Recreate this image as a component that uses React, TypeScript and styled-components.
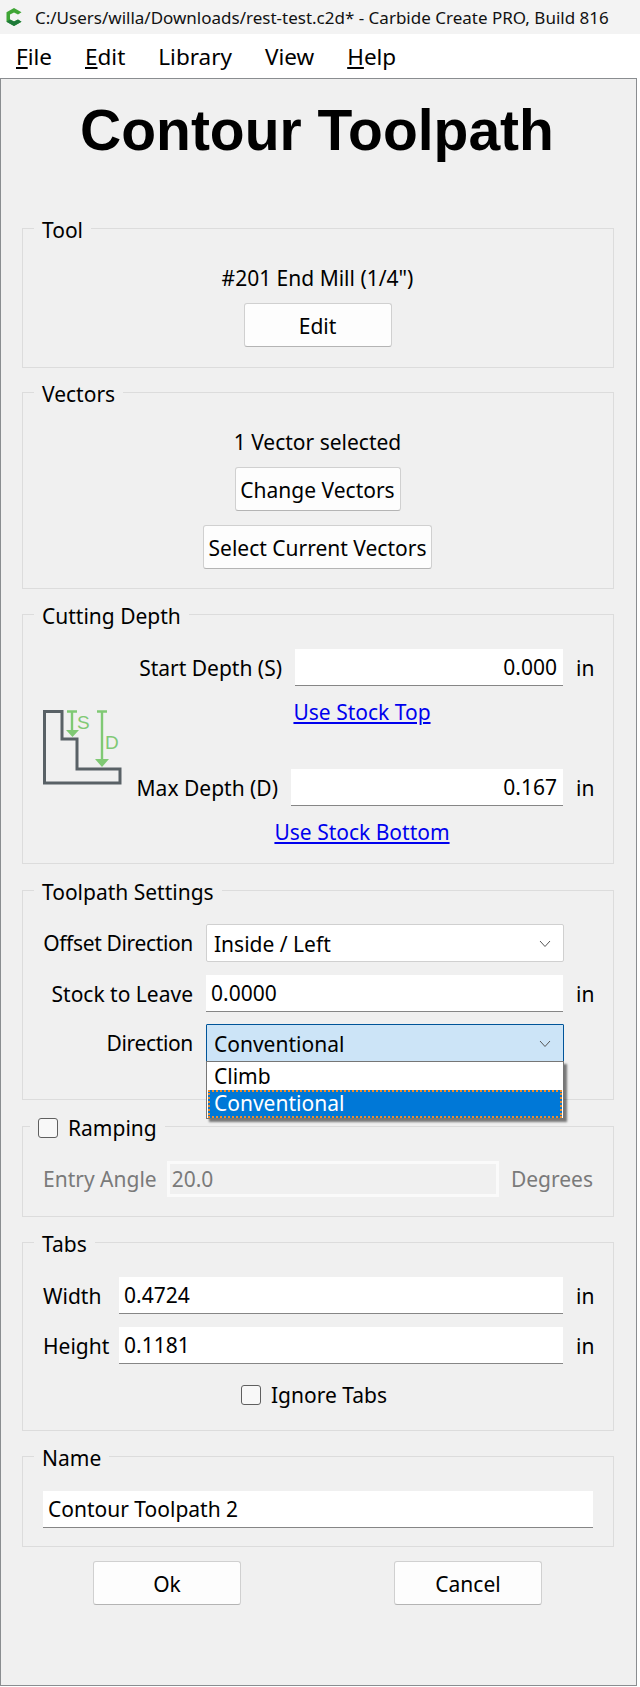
import React from "react";
import styled, { createGlobalStyle } from "styled-components";

const Global = createGlobalStyle`
  html, body { margin: 0; padding: 0; background: #fff; }
  body { font-family: "Noto Sans", "Liberation Sans", sans-serif; font-size: 21px; color: #000; }
  * { box-sizing: border-box; }
`;

const Page = styled.div`
  width: 640px;
  height: 1687px;
  overflow: hidden;
  background: #fff;
`;

const TitleBar = styled.div`
  height: 34px;
  background: #f3f3f3;
  display: flex;
  align-items: center;
  padding-left: 6px;
  gap: 13px;
  font-size: 17px;
  color: #111;
  white-space: nowrap;
`;

const MenuBar = styled.div`
  height: 44px;
  display: flex;
  align-items: center;
  padding-left: 16px;
  gap: 33px;
  font-size: 22.5px;
`;

const Underlined = styled.span`
  text-decoration: underline;
`;

const Dialog = styled.div`
  width: 637px;
  height: 1608px;
  background: #f0f0f0;
  border: 1px solid #8a8d90;
  padding: 0 22px 0 21px;
`;

const Heading = styled.h1`
  margin: 20px 0 0;
  height: 104px;
  padding-right: 2px;
  text-align: center;
  font-family: "Liberation Sans", sans-serif;
  font-size: 57px;
  line-height: 62px;
  font-weight: 700;
  white-space: nowrap;
`;

const Group = styled.section<{ $height: number; $gap: number }>`
  position: relative;
  height: ${(p) => p.$height}px;
  margin-top: ${(p) => p.$gap}px;
  border: 1px solid #dcdcdc;
`;

const Legend = styled.div<{ $left?: number }>`
  position: absolute;
  left: ${(p) => p.$left ?? 11}px;
  top: -13px;
  height: 28px;
  padding: 0 8px;
  line-height: 28px;
  background: #f0f0f0;
  display: flex;
  align-items: center;
  gap: 10px;
  white-space: nowrap;
`;

const Body = styled.div<{ $top: number }>`
  display: flex;
  flex-direction: column;
  align-items: center;
  padding: ${(p) => p.$top}px 1px 0 0;
`;

const Line = styled.div`
  height: 28px;
  line-height: 28px;
`;

const Button = styled.button<{ $w: number; $mt?: number }>`
  width: ${(p) => p.$w}px;
  height: 44px;
  margin-top: ${(p) => p.$mt ?? 0}px;
  background: #fdfdfd;
  border: 1px solid #d0d0d0;
  border-bottom-color: #b4b4b4;
  border-radius: 3px;
  font: inherit;
  color: #000;
  padding: 2px 0 0;
  white-space: nowrap;
`;

const Field = styled.div<{ $align?: string }>`
  height: 37px;
  flex: 1;
  min-width: 0;
  background: #fff;
  border-bottom: 1px solid #868686;
  padding: 0 6px 0 5px;
  line-height: 36px;
  text-align: ${(p) => p.$align ?? "left"};
`;

const Row = styled.div<{ $mt?: number; $pl?: number; $gap?: number }>`
  display: flex;
  align-items: center;
  margin-top: ${(p) => p.$mt ?? 0}px;
  padding-left: ${(p) => p.$pl ?? 20}px;
  gap: ${(p) => p.$gap ?? 13}px;
  padding-right: 20px;
`;

const Unit = styled.div`
  width: 17px;
`;

const Label = styled.div<{ $w: number; $tight?: boolean }>`
  width: ${(p) => p.$w}px;
  flex: none;
  text-align: right;
  white-space: nowrap;
  letter-spacing: ${(p) => (p.$tight ? "-0.35px" : "normal")};
`;

const LeftLabel = styled(Label)`
  text-align: left;
`;

const DepthArea = styled.div`
  display: flex;
  padding-top: 34px;
`;

const DepthIconBox = styled.div`
  width: 111px;
  flex: none;
  padding: 61px 0 0 20px;
`;

const DepthFields = styled.div`
  flex: 1;
`;

const LinkRow = styled.div<{ $mt: number }>`
  margin-top: ${(p) => p.$mt}px;
  text-align: center;
  padding-right: 23px;
  height: 28px;
  line-height: 28px;
`;

const Link = styled.a`
  color: #0000ee;
  text-decoration: underline;
`;

const ComboWrap = styled.div`
  position: relative;
  flex: 1;
  margin-right: 29px;
  min-width: 0;
`;

const Combo = styled.div<{ $active?: boolean }>`
  height: 38px;
  background: ${(p) => (p.$active ? "#cce4f7" : "#fff")};
  border: 1px solid ${(p) => (p.$active ? "#005499" : "#d0d0d0")};
  border-radius: ${(p) => (p.$active ? "1px" : "2px")};
  display: flex;
  align-items: center;
  justify-content: space-between;
  padding: 2px 12px 0 7px;
`;

const DropList = styled.div`
  position: absolute;
  left: 0;
  right: 0;
  top: 37px;
  height: 58px;
  background: #fff;
  border: 1px solid #767676;
  box-shadow: 3px 3px 2px rgba(0, 0, 0, 0.5);
  padding: 1px 1px 0;
  z-index: 2;
`;

const Option = styled.div<{ $on?: boolean }>`
  height: ${(p) => (p.$on ? 28 : 27)}px;
  line-height: 26px;
  padding-left: 6px;
  color: ${(p) => (p.$on ? "#fff" : "#000")};
  background: ${(p) => (p.$on ? "#0078d7" : "transparent")};
  outline: ${(p) => (p.$on ? "2px dotted #f28c28" : "none")};
  outline-offset: -2px;
`;

const Check = styled.span`
  display: inline-block;
  width: 20px;
  height: 20px;
  background: #f8f8f8;
  border: 1px solid #5f5f5f;
  border-radius: 3px;
  flex: none;
`;

const CheckRow = styled.div`
  display: flex;
  align-items: center;
  justify-content: center;
  gap: 10px;
  margin-top: 17px;
  padding-right: 8px;
`;

const DisabledField = styled.div`
  flex: 1;
  height: 36px;
  margin-right: 2px;
  border: 3px solid #fafafa;
  background: #f0f0f0;
  color: #7a7a7a;
  line-height: 30px;
  padding-left: 2px;
`;

const Muted = styled.div`
  color: #7a7a7a;
  white-space: nowrap;
`;

const Footer = styled.div`
  display: flex;
  justify-content: space-between;
  padding: 14px 72px 0 71px;
`;

const Chevron = () => (
  <svg width="12" height="8" viewBox="0 0 12 8" fill="none" stroke="#555" strokeWidth="1">
    <path d="M1 1 L6 6.5 L11 1" />
  </svg>
);

const AppLogo = () => (
  <svg width="16" height="18" viewBox="0 0 16 18">
    <path d="M8 0 L15.5 4.3 L12 6.6 L8 4.4 L4 6.6 V11.4 L8 13.6 L12 11.4 L15.5 13.7 L8 18 L0.5 13.7 V4.3 Z" fill="#3fa535" />
    <path d="M0.5 13.7 L4 11.4 L8 13.6 L12 11.4 L15.5 13.7 L8 18 Z" fill="#1f7a3a" />
  </svg>
);

const DepthIcon = () => (
  <svg width="80" height="76" viewBox="0 0 80 76" fill="none">
    <path d="M1.5 1.5 H19 V29 H34 V59 H77 V73 H1.5 Z" stroke="#596166" strokeWidth="3" />
    <g stroke="#80c974" strokeWidth="2.4">
      <path d="M24 1.5 H34 M29 1.5 V21" />
      <path d="M54 1.5 H64 M59 1.5 V50" />
    </g>
    <path d="M23 20 H36 L29.5 27 Z M52 49 H66 L59 57 Z" fill="#80c974" />
    <text x="34" y="19" fontSize="19" fontFamily="Liberation Sans, sans-serif" fill="#80c974">S</text>
    <text x="62" y="39" fontSize="19" fontFamily="Liberation Sans, sans-serif" fill="#80c974">D</text>
  </svg>
);

export default function App() {
  return (
    <Page>
      <Global />
      <TitleBar>
        <AppLogo />
        <span>C:/Users/willa/Downloads/rest-test.c2d* - Carbide Create PRO, Build 816</span>
      </TitleBar>
      <MenuBar>
        <span><Underlined>F</Underlined>ile</span>
        <span><Underlined>E</Underlined>dit</span>
        <span>Library</span>
        <span>View</span>
        <span><Underlined>H</Underlined>elp</span>
      </MenuBar>
      <Dialog>
        <Heading>Contour Toolpath</Heading>
        <Group $height={140} $gap={25}>
          <Legend>Tool</Legend>
          <Body $top={35}>
            <Line>#201 End Mill (1/4")</Line>
            <Button $w={148} $mt={11}>Edit</Button>
          </Body>
        </Group>
        <Group $height={197} $gap={24}>
          <Legend>Vectors</Legend>
          <Body $top={35}>
            <Line>1 Vector selected</Line>
            <Button $w={166} $mt={11}>Change Vectors</Button>
            <Button $w={229} $mt={14}>Select Current Vectors</Button>
          </Body>
        </Group>
        <Group $height={250} $gap={25}>
          <Legend>Cutting Depth</Legend>
          <DepthArea>
            <DepthIconBox><DepthIcon /></DepthIconBox>
            <DepthFields>
              <Row $pl={0} $gap={13}>
                <Label $w={148}>Start Depth (S)</Label>
                <Field $align="right">0.000</Field>
                <Unit>in</Unit>
              </Row>
              <LinkRow $mt={12}><Link>Use Stock Top</Link></LinkRow>
              <Row $pl={0} $mt={43} $gap={13}>
                <Label $w={144}>Max Depth (D)</Label>
                <Field $align="right">0.167</Field>
                <Unit>in</Unit>
              </Row>
              <LinkRow $mt={12}><Link>Use Stock Bottom</Link></LinkRow>
            </DepthFields>
          </DepthArea>
        </Group>
        <Group $height={210} $gap={26}>
          <Legend>Toolpath Settings</Legend>
          <Row $mt={33} $gap={13}>
            <Label $w={150} $tight>Offset Direction</Label>
            <ComboWrap>
              <Combo>Inside / Left<Chevron /></Combo>
            </ComboWrap>
          </Row>
          <Row $mt={13} $gap={13}>
            <Label $w={150}>Stock to Leave</Label>
            <Field>0.0000</Field>
            <Unit>in</Unit>
          </Row>
          <Row $mt={12} $gap={13}>
            <Label $w={150} $tight>Direction</Label>
            <ComboWrap>
              <Combo $active>Conventional<Chevron /></Combo>
              <DropList>
                <Option>Climb</Option>
                <Option $on>Conventional</Option>
              </DropList>
            </ComboWrap>
          </Row>
        </Group>
        <Group $height={91} $gap={26}>
          <Legend $left={7}><Check />Ramping</Legend>
          <Row $mt={34} $gap={10}>
            <Muted>Entry Angle</Muted>
            <DisabledField>20.0</DisabledField>
            <Muted>Degrees</Muted>
          </Row>
        </Group>
        <Group $height={189} $gap={25}>
          <Legend>Tabs</Legend>
          <Row $mt={34} $gap={13}>
            <LeftLabel $w={63}>Width</LeftLabel>
            <Field>0.4724</Field>
            <Unit>in</Unit>
          </Row>
          <Row $mt={13} $gap={13}>
            <LeftLabel $w={63}>Height</LeftLabel>
            <Field>0.1181</Field>
            <Unit>in</Unit>
          </Row>
          <CheckRow><Check />Ignore Tabs</CheckRow>
        </Group>
        <Group $height={91} $gap={25}>
          <Legend>Name</Legend>
          <Row $mt={34}>
            <Field>Contour Toolpath 2</Field>
          </Row>
        </Group>
        <Footer>
          <Button $w={148}>Ok</Button>
          <Button $w={148}>Cancel</Button>
        </Footer>
      </Dialog>
    </Page>
  );
}
